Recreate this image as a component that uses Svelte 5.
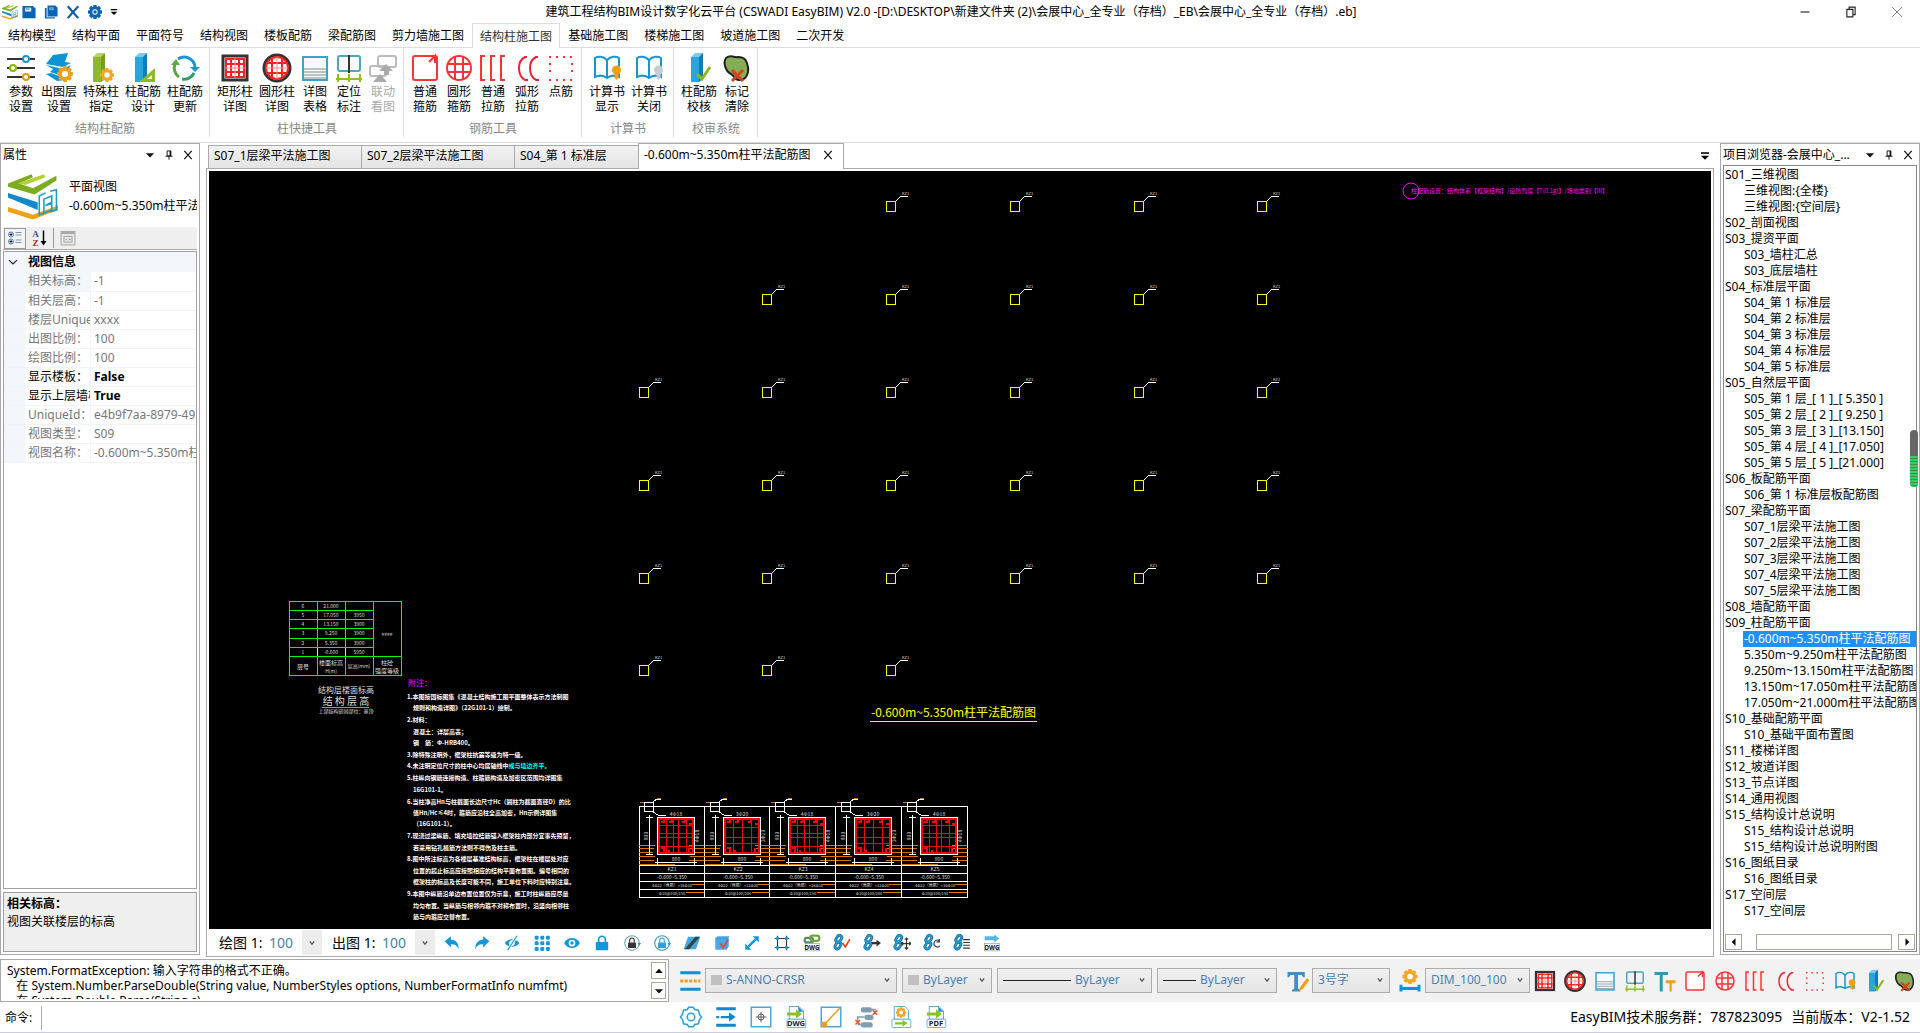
<script lang="ts">
  const gear = (cx: number, cy: number, r: number, color: string, hole = '#fff') =>
    `<g fill="${color}"><circle cx="${cx}" cy="${cy}" r="${r * 0.8}"/>` +
    [0, 45, 90, 135].map((a) => `<rect x="${cx - r}" y="${cy - r * 0.25}" width="${r * 2}" height="${r * 0.5}" rx="1" transform="rotate(${a} ${cx} ${cy})"/>`).join('') +
    `</g><circle cx="${cx}" cy="${cy}" r="${r * 0.38}" fill="${hole}"/>`;

  const book = (bulb: string) =>
    `<g fill="none" stroke="#1b95cf" stroke-width="2"><path d="M16 8C12 4 7 4 4 6v19c4-2 8-2 12 1 4-3 8-3 12-1V6c-3-2-8-2-12 2z"/><path d="M16 8v18"/></g><circle cx="25.500" cy="18" r="4.500" fill="${bulb}"/><path d="M23.500 21h4v5l-2 2-2-2z" fill="${bulb}"/>`;

  const column = (front: string, top: string, side: string) =>
    `<path d="M8 5l4-4h8l-3 4z" fill="${top}"/><path d="M8 5h8v25H8z" fill="${front}"/><path d="M16 5l4-4v26l-4 3z" fill="${side}"/>`;

  const chain = '<g fill="none"><rect x="6" y="2" width="8" height="13" rx="4" transform="rotate(30 10 9)" stroke="#2a4f66" stroke-width="5"/><rect x="5" y="14" width="8" height="13" rx="4" transform="rotate(30 9 20)" stroke="#2a4f66" stroke-width="5"/><rect x="6" y="2" width="8" height="13" rx="4" transform="rotate(30 10 9)" stroke="#17a0e0" stroke-width="3"/><rect x="5" y="14" width="8" height="13" rx="4" transform="rotate(30 9 20)" stroke="#17a0e0" stroke-width="3"/></g>';

  const page = (label: string) =>
    `<path d="M7 2h13l6 6v11H7z" fill="#fff" stroke="#1b95cf" stroke-width="1"/><path d="M19 2l7 7h-7z" fill="#1b95cf"/><path d="M4 10h12V6l8 6-8 6v-4H4z" fill="#8cc220"/><rect x="4" y="19" width="25" height="11" rx="1" fill="#fff" stroke="#3a9fd0"/><text x="16" y="28" text-anchor="middle" font-size="10" font-weight="700" fill="#123">${label}</text>`;

  const lock = (color: string, s = '') => `<g ${s}><rect x="9" y="15" width="14" height="10" rx="1" fill="${color}"/><path d="M12 15v-4a4 4 0 0 1 8 0v4" fill="none" stroke="${color}" stroke-width="2"/></g>`;

  const icons: Record<string, string> = {
    params: '<g stroke="#333" stroke-width="2"><path d="M2 7h28M2 16h28M2 25h28"/></g><g fill="#fff" stroke-width="2"><circle cx="21" cy="7" r="3" stroke="#1b95cf"/><circle cx="8" cy="16" r="3" stroke="#8ab800"/><circle cx="21" cy="25" r="3" stroke="#e59a00"/></g>',
    layers: '<path d="M10 3l15-2-3 9 6 1-8 4-17-3z" fill="#0c93d3"/><path d="M3 13l17 4 8-4-4 6-8 4-9-3 3-3z" fill="#0c93d3"/><path d="M3 22l5-1 10 4 4 3-8 1z" fill="#0c93d3"/>' + gear(22, 22, 8, '#f0a020'),
    special: column('#8dba2c', '#b5d567', '#76a01c') + gear(22, 23, 7, '#f5a623'),
    design: column('#2aa4dd', '#7ccbee', '#0d7fb5') + '<path fill-rule="evenodd" d="M28 16v14H12zM25 23v4h-5z" fill="#8db92e"/>',
    update: '<g fill="none" stroke-width="3"><path d="M9 7a11 11 0 0 1 17 8" stroke="#1b95cf"/><path d="M6 12a11 11 0 0 0 4 13" stroke="#5aa845"/><path d="M13 27a11 11 0 0 0 12-6" stroke="#2f9f6a"/></g><path d="M21 15h10l-5 5z" fill="#1b95cf"/><path d="M2 13h9l-4-6z" fill="#5aa845"/>',
    rectcol: '<rect x="4" y="4" width="24" height="24" fill="#fff" stroke="#333" stroke-width="3"/><rect x="7" y="7" width="18" height="18" fill="none" stroke="#f22" stroke-width="2"/><path d="M12 6v20M20 6v20M6 12h20M6 20h20" stroke="#f22" stroke-width="2"/><path d="M16 6v20M6 16h20" stroke="#f88"/>',
    roundcol: '<circle cx="16" cy="16" r="13" fill="#fff" stroke="#333" stroke-width="3"/><circle cx="16" cy="16" r="11" fill="none" stroke="#f22" stroke-width="2"/><path d="M11 6v20M21 6v20M6 11h20M6 21h20" stroke="#f22" stroke-width="2"/><path d="M16 5v22M5 16h22" stroke="#f88"/>',
    table: '<rect x="4" y="5" width="24" height="23" fill="#f4fafd" stroke="#3aa3cc" stroke-width="2"/><path d="M5 17h22M5 20h22M5 23h22M5 26h22" stroke="#888"/>',
    locate: '<g fill="none"><rect x="5" y="4" width="22" height="15" rx="2" stroke="#4aa9bd" stroke-width="2"/><path d="M16 3v18" stroke="#333" stroke-width="2"/><path d="M5 22v8M16 22v8M27 22v8M3 27h26" stroke="#8cc220" stroke-width="2"/></g>',
    linked: '<g fill="none" stroke="#bbb" stroke-width="2"><rect x="11" y="4" width="18" height="11" rx="2"/><rect x="3" y="14" width="16" height="10" rx="2"/></g><path d="M12 19l7-7 7 7h-4v4h-5v-4zM6 30l7-8 7 8z" fill="#aaa"/>',
    stirrup: '<rect x="4" y="4" width="24" height="24" rx="2" fill="#fff" stroke="#f33" stroke-width="2"/><path d="M20 10l6-6v7" fill="none" stroke="#f33" stroke-width="2"/>',
    ring: '<g fill="none" stroke="#f33" stroke-width="2"><circle cx="16" cy="16" r="12"/><path d="M12 5v22M20 5v22M5 12h22M5 20h22"/></g>',
    ties: '<path d="M8 4H4v24h4M18 4h-4v24h4M28 4h-4v24h4" fill="none" stroke="#f33" stroke-width="2"/>',
    arcs: '<path d="M16 5h-2C6 9 6 23 14 28h3M27 5h-2C17 9 17 23 25 28h3" fill="none" stroke="#e23" stroke-width="2"/>',
    dots: '<g stroke="#f33" stroke-width="2" fill="none" stroke-dasharray="2 5"><path d="M4 5h25M4 28h25M5 11v14M27 11v14"/></g>',
    bookon: book('#f0a010'),
    bookoff: book('#c5cdd3'),
    check: column('#2aa4dd', '#7ccbee', '#0d7fb5') + '<path d="M14 22l5 5 8-12" fill="none" stroke="#8cb820" stroke-width="3"/>',
    clear: '<path d="M5 6c5-4 8 0 12-1 8 0 9 5 10 10 1 6-2 14-9 13-5 0-4-4-8-6C4 19 2 10 5 6z" fill="#86ad55" stroke="#222" stroke-width="2"/><path d="M11 18l11 11M22 18L11 29" stroke="#d5401c" stroke-width="3"/>',
    texts: '<path d="M2 4h18v4H13v22H9V8H2z" fill="#2a9cb8"/><path d="M17 15h13v4h-5v11h-3V19h-5z" fill="#f0a010"/>',
    undo: '<path d="M3 13L14 4v6c9 0 14 6 14 17-3-7-7-9-14-9v6z" fill="#1296db"/>',
    redo: '<path d="M29 13L18 4v6C9 10 4 16 4 27c3-7 7-9 14-9v6z" fill="#1296db"/>',
    hide: '<path d="M3 16c6-9 20-9 26 0-6 9-20 9-26 0z" fill="#1296db"/><circle cx="16" cy="16" r="5" fill="#fff"/><path d="M25 3L8 29" stroke="#fff" stroke-width="5"/><path d="M25 3L8 29" stroke="#1296db" stroke-width="2"/>',
    grid: '<g fill="#1296db">' + [3, 13, 23].flatMap((x) => [3, 13, 23].map((y) => `<rect x="${x}" y="${y}" width="7" height="7" rx="2"/>`)).join('') + '</g>',
    eye: '<path d="M2 16c6-12 22-12 28 0-6 12-22 12-28 0z" fill="#1296db"/><circle cx="16" cy="16" r="6" fill="#fff"/><circle cx="16" cy="16" r="3" fill="#1296db"/>',
    lock: '<rect x="5" y="14" width="22" height="15" rx="1" fill="#1296db"/><path d="M10 15v-5a6 6 0 0 1 12 0v5" fill="none" stroke="#1296db" stroke-width="3"/>',
    lockring: '<circle cx="16" cy="16" r="13" fill="#fff" stroke="#7aa" stroke-width="2"/>' + lock('#333') + '<path d="M26 16h6l-3 5z" fill="#1296db"/>',
    unlockring: '<circle cx="16" cy="16" r="13" fill="#fff" stroke="#49b" stroke-width="2"/>' + lock('#2b9fe0') + '<path d="M26 16h6l-3 5z" fill="#1296db"/>',
    sheet: '<path d="M9 5h22l-8 22H1z" fill="#43a6e6"/><path d="M22 5h8L11 27H3z" fill="#344"/>',
    cube: '<path d="M4 8l4-4h20v18l-4 6H4z" fill="#4aa8ea"/><path d="M4 8h20v19M24 8l4-4" stroke="#2f8fd6" fill="none"/><path d="M13 17l5 7 9-14" fill="none" stroke="#e8461e" stroke-width="3"/>',
    expand: '<g fill="#1296db"><path d="M17 4h11v11zM4 17v11h11z"/><path d="M21 8l3 3L11 24l-3-3z"/></g>',
    frame: '<path d="M8 3v26M24 3v26M3 8h26M3 24h26" stroke="#333" stroke-width="2"/><g fill="#1296db"><circle cx="8" cy="8" r="3"/><circle cx="24" cy="8" r="3"/><circle cx="8" cy="24" r="3"/><circle cx="24" cy="24" r="3"/></g>',
    dwglink: '<g fill="none" stroke-width="4"><rect x="3" y="7" width="15" height="8" rx="4" stroke="#5a8a6a"/><rect x="13" y="3" width="16" height="9" rx="4" stroke="#6fa83a"/></g><rect x="4" y="17" width="25" height="13" fill="#fff" stroke="#888"/><text x="16" y="28" text-anchor="middle" font-size="11" font-weight="700" fill="#111">DWG</text>',
    chcheck: chain + '<path d="M17 16l5 7 8-14" fill="none" stroke="#e8461e" stroke-width="3"/>',
    charrow: chain + '<path d="M16 14h8v-4l8 6-8 6v-4h-8z" fill="#333"/>',
    chmove: chain + '<path d="M24 8v18M15 17h18M21 10l3-3 3 3M21 24l3 3 3-3M18 14l-3 3 3 3M29 14l3 3-3 3" fill="none" stroke="#333" stroke-width="2"/>',
    chrot: chain + '<path d="M29 12a6 6 0 1 0 1 9M29 9v5h-5" fill="none" stroke="#333" stroke-width="2"/>',
    chlist: chain + '<path d="M18 10h12M18 15h12M18 20h12M18 25h12" stroke="#333" stroke-width="2"/>',
    dwgout: '<path d="M3 4h17V1l9 7-9 7v-4H3z" fill="#5ab4ee"/><rect x="3" y="17" width="26" height="13" fill="#fff" stroke="#888"/><text x="16" y="28" text-anchor="middle" font-size="11" font-weight="700" fill="#111">DWG</text>',
    linetype: '<path d="M3 5h27M3 27h27" stroke="#0c93d3" stroke-width="4"/><path d="M3 16h27" stroke="#f0a010" stroke-width="4" stroke-dasharray="4 2"/>',
    textstyle: '<path d="M2 4h23v7h-2l-2-3h-5v18l3 2v2H8v-2l3-2V8H6l-2 3H2z" fill="#3f8fc8"/><path d="M28 12l3 3-9 12-6 3 3-6z" fill="#f0a010"/>',
    dimstyle: gear(16, 10, 10, '#f5a623') + '<path d="M4 21v9M28 21v9M4 26h24" stroke="#0c93d3" stroke-width="4"/>',
    cog: '<path d="M13 3h6l2 3 5 1 1 5 3 4-3 4-1 5-5 1-2 3h-6l-2-3-5-1-1-5-3-4 3-4 1-5 5-1z" fill="none" stroke="#2a9fe0" stroke-width="2"/><circle cx="16" cy="16" r="5" fill="none" stroke="#2a9fe0" stroke-width="2"/>',
    flow: '<path d="M3 5h26M3 27h26" stroke="#1186c8" stroke-width="4"/><path d="M3 16h4M9 16h12" stroke="#1186c8" stroke-width="3"/><path d="M20 10l9 6-9 6z" fill="#1186c8"/>',
    target: '<rect x="3" y="3" width="26" height="26" fill="#fff" stroke="#4aa8e0" stroke-width="2"/><circle cx="16" cy="16" r="4" fill="none" stroke="#333"/><path d="M16 9v14M9 16h14" stroke="#333"/>',
    dwg: page('DWG'),
    pdf: page('PDF'),
    diag: '<rect x="3" y="3" width="26" height="26" fill="#fff" stroke="#4aa8e0" stroke-width="2"/><path d="M8 25L28 4" stroke="#f0a010" stroke-width="2"/><circle cx="7" cy="26" r="4" fill="#f0a010"/>',
    nodes: '<g fill="#7fa0b0"><rect x="9" y="3" width="15" height="7" rx="3"/><rect x="14" y="13" width="12" height="7" rx="3"/><rect x="9" y="23" width="16" height="7" rx="3"/></g><path d="M24 6h5M14 16H5v5M9 26H5" fill="none" stroke="#7fa0b0" stroke-width="2"/><path d="M25 7l6 6M31 7l-6 6M2 20l6 6M8 20l-6 6" stroke="#e0502a" stroke-width="2"/>',
    report: '<path d="M7 2h14l5 5v12H7z" fill="#fff" stroke="#1b95cf"/>' + gear(16, 10, 7, '#f5a623') + '<rect x="4" y="19" width="25" height="11" rx="1" fill="#fff" stroke="#3a9fd0"/><path d="M8 23h10v-3l7 4-7 5v-3H8z" fill="#8cc220"/>',
    save: '<path d="M1 2h24l6 6v22H1z" fill="#0a64b4"/><path d="M7 6h14v9H7z" fill="#dcecf8"/><path d="M9 9h8" stroke="#0a64b4" stroke-width="2"/>',
    saveas: '<path d="M8 1h18l5 5v20H8z" fill="#0a64b4"/><path d="M2 7h4v21h19v3H2z" fill="#0a64b4"/><path d="M12 5h11v7H12z" fill="#5f9ed2"/>',
    close: '<path d="M4 3l24 27M28 3L4 30" stroke="#0a5cac" stroke-width="5"/>',
    setting: gear(16, 16, 16, '#0a64b4', '#fff') + '<circle cx="16" cy="16" r="4" fill="#0a64b4"/>',
    logo: '<path d="M0 8L15 2l1 2L7 8l9 3L31 3v3L17 15 0 10z" fill="#7cad20"/><path d="M6 8L23 2l1 2L11 9z" fill="#b5cf35"/><path d="M0 14l19 6v5L0 17z" fill="#1288c9"/><path d="M0 23l16 5 16-6v3l-16 6L0 26z" fill="#f0a010"/><g fill="none" stroke="#1b9cc9" stroke-width="1"><path d="M27 13l4-1v13l-4 1M24 14l-4 2v12l3-1"/><path d="M23 18l5-2v4l-4 2 4-1v4l-5 2z"/></g>',
    category: '<g fill="#fff" stroke="#4a7ab0" stroke-width="2"><circle cx="8" cy="9" r="5"/><circle cx="8" cy="23" r="5"/></g><path d="M5 9h6M8 6v6M5 23h6M8 20v6" stroke="#123" stroke-width="2"/><path d="M17 5h12M17 10h12M17 20h12M17 25h12" stroke="#7a94b8" stroke-width="2"/>',
    sort: '<text x="9" y="14" text-anchor="middle" font-size="18" font-weight="700" font-family="Liberation Serif" fill="#2a4fa8">A</text><text x="9" y="31" text-anchor="middle" font-size="18" font-weight="700" font-family="Liberation Serif" fill="#a02828">Z</text><path d="M25 1v24" stroke="#000" stroke-width="3"/><path d="M19 22h12l-6 9z"/>',
    props: '<rect x="2" y="3" width="28" height="27" fill="#e4e4e4" stroke="#aaa" stroke-width="2"/><path d="M3 6h26" stroke="#aaa" stroke-width="4"/><path d="M8 13h16v11H8zM11 19h3M17 19h5" fill="none" stroke="#aaa" stroke-width="2"/>',
    down: '<path d="M3 10h26L16 24z" fill="#111"/>',
    up: '<path d="M6 21h20L16 10z"/>',
    left: '<path d="M20 6v20L10 16z"/>',
    right: '<path d="M12 6v20l10-10z"/>',
    menu: '<path d="M3 4h26v5H3z"/><path d="M3 15h26L16 28z"/>',
    pin: '<path d="M10 3h12v16H10zM5 20h22M16 20v11" fill="none" stroke="#111" stroke-width="3"/><path d="M18 3h4v16h-4z"/>',
    x: '<path d="M4 3l24 26M28 3L4 29" stroke="#111" stroke-width="4"/>',
    chev: '<path d="M9 11l7 9 7-9" fill="none" stroke="#555" stroke-width="4"/>',
    fold: '<path d="M3 10l13 12 13-12" fill="none" stroke="#222" stroke-width="4"/>',
    min: '<path d="M4 16h24" stroke="#222" stroke-width="3"/>',
    restore: '<path d="M5 9h16v20H5zM11 9V3h16v20h-6" fill="none" stroke="#222" stroke-width="3"/>',
    quit: '<path d="M3 3l26 26M29 3L3 29" stroke="#555" stroke-width="2"/>'
  };

  const menus = ['结构模型', '结构平面', '平面符号', '结构视图', '楼板配筋', '梁配筋图', '剪力墙施工图', '结构柱施工图', '基础施工图', '楼梯施工图', '坡道施工图', '二次开发'];

  const groups = [
    { name: '结构柱配筋', items: [['params', '参数', '设置'], ['layers', '出图层', '设置'], ['special', '特殊柱', '指定'], ['design', '柱配筋', '设计'], ['update', '柱配筋', '更新']] },
    { name: '柱快捷工具', items: [['rectcol', '矩形柱', '详图'], ['roundcol', '圆形柱', '详图'], ['table', '详图', '表格'], ['locate', '定位', '标注'], ['linked', '联动', '看图']] },
    { name: '钢筋工具', items: [['stirrup', '普通', '箍筋'], ['ring', '圆形', '箍筋'], ['ties', '普通', '拉筋'], ['arcs', '弧形', '拉筋'], ['dots', '点筋', '']] },
    { name: '计算书', items: [['bookon', '计算书', '显示'], ['bookoff', '计算书', '关闭']] },
    { name: '校审系统', items: [['check', '柱配筋', '校核'], ['clear', '标记', '清除']] }
  ];

  const props = [
    ['相关标高：', '-1'], ['相关层高：', '-1'], ['楼层UniqueId：', 'xxxx'], ['出图比例：', '100'], ['绘图比例：', '100'],
    ['显示楼板：', 'False'], ['显示上层墙柱：', 'True'], ['UniqueId：', 'e4b9f7aa-8979-4952'], ['视图类型：', 'S09'], ['视图名称：', '-0.600m~5.350m柱平法配筋图']
  ];

  const docTabs = ['S07_1层梁平法施工图', 'S07_2层梁平法施工图', 'S04_第 1 标准层'];
  const activeDoc = '-0.600m~5.350m柱平法配筋图';

  const tree: [string, string[]][] = [
    ['S01_三维视图', ['三维视图:{全楼}', '三维视图:{空间层}']],
    ['S02_剖面视图', []],
    ['S03_提资平面', ['S03_墙柱汇总', 'S03_底层墙柱']],
    ['S04_标准层平面', [1, 2, 3, 4, 5].map((n) => `S04_第 ${n} 标准层`)],
    ['S05_自然层平面', ['S05_第 1 层_[ 1 ]_[ 5.350 ]', 'S05_第 2 层_[ 2 ]_[ 9.250 ]', 'S05_第 3 层_[ 3 ]_[13.150]', 'S05_第 4 层_[ 4 ]_[17.050]', 'S05_第 5 层_[ 5 ]_[21.000]']],
    ['S06_板配筋平面', ['S06_第 1 标准层板配筋图']],
    ['S07_梁配筋平面', [1, 2, 3, 4, 5].map((n) => `S07_${n}层梁平法施工图`)],
    ['S08_墙配筋平面', []],
    ['S09_柱配筋平面', [activeDoc, '5.350m~9.250m柱平法配筋图', '9.250m~13.150m柱平法配筋图', '13.150m~17.050m柱平法配筋图', '17.050m~21.000m柱平法配筋图']],
    ['S10_基础配筋平面', ['S10_基础平面布置图']],
    ['S11_楼梯详图', []],
    ['S12_坡道详图', []],
    ['S13_节点详图', []],
    ['S14_通用视图', []],
    ['S15_结构设计总说明', ['S15_结构设计总说明', 'S15_结构设计总说明附图']],
    ['S16_图纸目录', ['S16_图纸目录']],
    ['S17_空间层', ['S17_空间层']]
  ];

  const viewTools = ['undo', 'redo', 'hide', 'grid', 'eye', 'lock', 'lockring', 'unlockring', 'sheet', 'cube', 'expand', 'frame', 'dwglink', 'chcheck', 'charrow', 'chmove', 'chrot', 'chlist', 'dwgout'];
  const quickTools = ['rectcol', 'roundcol', 'table', 'locate', 'texts', 'stirrup', 'ring', 'ties', 'arcs', 'dots', 'bookon', 'check', 'clear'];
  const cmdTools = ['cog', 'flow', 'target', 'dwg', 'diag', 'nodes', 'report', 'pdf'];

  const log = `System.FormatException: 输入字符串的格式不正确。
   在 System.Number.ParseDouble(String value, NumberStyles options, NumberFormatInfo numfmt)
   在 System.Double.Parse(String s)`;

  const colX = [639, 762, 886, 1010, 1134, 1257];
  const rowY = [201, 294, 387, 480, 573, 665];
  const spans = [[2, 5], [1, 5], [0, 5], [0, 5], [0, 5], [0, 2]];
  const markers = rowY.flatMap((y, r) => colX.slice(spans[r][0], spans[r][1] + 1).map((x) => ({ x, y })));

  const levels = [
    ['6', '21.000', ''], ['5', '17.050', '3950'], ['4', '13.150', '3900'], ['3', '9.250', '3900'], ['2', '5.350', '3900'], ['1', '-0.600', '5950']
  ];
  const levelY = [601, 610, 619, 628, 638, 647];

  const notes: [number, string, string?][] = [
    [0, '1.本图按国标图集《混凝土结构施工图平面整体表示方法制图'],
    [1, '规则和构造详图》（22G101-1）绘制。'],
    [0, '2.材料：'],
    [1, '混凝土：详层高表；'],
    [1, '钢　筋：Φ-HRB400。'],
    [0, '3.除特殊注明外，框架柱抗震等级为特一级。'],
    [0, '4.未注明定位尺寸的柱中心均居轴线中', '或与墙边齐平。'],
    [0, '5.柱纵向钢筋连接构造、柱箍筋构造及加密区范围均详图集'],
    [1, '16G101-1。'],
    [0, '6.当柱净高Hn与柱截面长边尺寸Hc（圆柱为截面直径D）的比'],
    [1, '值Hn/Hc≤4时，箍筋应沿柱全高加密，Hn示例详图集'],
    [1, '（16G101-1）。'],
    [0, '7.现浇过梁纵筋、填充墙拉结筋锚入框架柱内部分宜事先预留，'],
    [1, '若采用钻孔植筋方法则不得伤及柱主筋。'],
    [0, '8.图中所注标高为各楼层基准结构标高，框架柱在楼层处对应'],
    [1, '位置的起止标高应按照相应的结构平面布置图。编号相同的'],
    [1, '框架柱的标高及长度可能不同，施工单位下料时应特别注意。'],
    [0, '9.本图中纵筋沿单边布置位置仅为示意，施工时柱纵筋应尽量'],
    [1, '均匀布置。当纵筋与相邻内箍不对称布置时，沿竖向相邻柱'],
    [1, '筋与内箍应交替布置。']
  ];
  const noteY = [697, 708, 720, 732, 743, 755, 766, 778, 790, 802, 813, 824, 836, 848, 859, 871, 882, 894, 906, 917];

  const details = [
    { x: 639, id: 'KZ1', top: '4Φ18', bars: '4Φ22（角筋）+16Φ18', tie: 'Φ10@100/150', dense: true },
    { x: 705, id: 'KZ2', top: '3Φ20', bars: '4Φ22（角筋）+12Φ20', tie: 'Φ10@100/200', dense: false },
    { x: 770, id: 'KZ3', top: '4Φ18', bars: '4Φ22（角筋）+16Φ18', tie: 'Φ10@100/150', dense: true },
    { x: 836, id: 'KZ4', top: '3Φ20', bars: '4Φ22（角筋）+12Φ20', tie: 'Φ10@100/200', dense: false },
    { x: 902, id: 'KZ5', top: '4Φ18', bars: '4Φ22（角筋）+16Φ18', tie: 'Φ10@100/150', dense: true }
  ];
  const orangeY = [845, 848, 852, 856, 860];

  let drawScale = $state('100');
  let plotScale = $state('100');
  let command = $state('');
</script>

{#snippet icon(name: string, cls: string)}
  <svg class={cls} viewBox="0 0 32 32" aria-hidden="true">{@html icons[name]}</svg>
{/snippet}

{#snippet combo(cls: string, label: string, value: string, swatch: boolean, line: boolean)}
  <label class="combo {cls}">
    {#if swatch}<span class="swatch"></span>{/if}
    {#if line}<span class="line"></span>{/if}
    <select aria-label={label} class:fit={line}><option>{value}</option></select>
    {@render icon('chev', 'i10')}
  </label>
{/snippet}

<div class="app">
  <header class="title">
    <div class="quick">
      {@render icon('logo', 'i16')}
      {#each ['save', 'saveas', 'close', 'setting'] as n}
        <button aria-label={n}>{@render icon(n, 'i14')}</button>
      {/each}
      <button aria-label="more">{@render icon('menu', 'i8')}</button>
    </div>
    <h1>建筑工程结构BIM设计数字化云平台 (CSWADI EasyBIM) V2.0 -[D:\DESKTOP\新建文件夹 (2)\会展中心_全专业（存档）_EB\会展中心_全专业（存档）.eb]</h1>
    <div class="win">
      {#each ['min', 'restore', 'quit'] as n}
        <button aria-label={n}>{@render icon(n, 'i12')}</button>
      {/each}
    </div>
  </header>

  <nav class="menus">
    {#each menus as m}
      <button class:active={m === '结构柱施工图'}>{m}</button>
    {/each}
  </nav>

  <div class="ribbon">
    {#each groups as g}
      <section class="group">
        <div class="items">
          {#each g.items as [n, a, b]}
            <button class:wide={a.length === 3} disabled={n === 'linked'}>
              {@render icon(n, 'i32')}
              <span>{a}</span><span>{b}</span>
            </button>
          {/each}
        </div>
        <h2>{g.name}</h2>
      </section>
    {/each}
  </div>

  <main>
    <aside class="panel left">
      <div class="phead">
        <h2>属性</h2>
        {#each ['down', 'pin', 'x'] as n}<button aria-label={n}>{@render icon(n, 'i10')}</button>{/each}
      </div>
      <div class="brand">
        {@render icon('logo', 'i50')}
        <div><p>平面视图</p><p>{activeDoc}</p></div>
      </div>
      <div class="ptools">
        <button class="on" aria-label="category">{@render icon('category', 'i16')}</button>
        <button aria-label="sort">{@render icon('sort', 'i16')}</button>
        <span class="bar"></span>
        <button aria-label="props">{@render icon('props', 'i16')}</button>
      </div>
      <div class="pgrid">
        <div class="cat">{@render icon('fold', 'i10')}<b>视图信息</b></div>
        <table>
          <tbody>
            {#each props as [k, v], i}
              <tr class:first={i === 0} class:strong={v === 'False' || v === 'True'}><td class="gut"></td><th scope="row">{k}</th><td class="val">{v}</td></tr>
            {/each}
          </tbody>
        </table>
      </div>
      <div class="desc"><b>相关标高：</b><p>视图关联楼层的标高</p></div>
    </aside>

    <section class="doc">
      <div class="tabs">
        {#each docTabs as t, i}
          <button class="tab" class:short={i === 2}>{t}</button>
        {/each}
        <div class="tab current"><span>{activeDoc}</span><button aria-label="close tab">{@render icon('x', 'i10')}</button></div>
        <button class="more" aria-label="tab list">{@render icon('menu', 'i10')}</button>
      </div>
      <div class="frame">
        <svg class="cad" viewBox="209 171 1502 758" role="img" aria-label={activeDoc}>
          {#each markers as m}
            <g fill="none" shape-rendering="crispEdges">
              <rect x={m.x + 0.5} y={m.y + 0.5} width="9" height="10" stroke="#ff0" />
              <path d="M{m.x + 10} {m.y}l5 -5h7" stroke="#fff" />
            </g>
            <text class="t4 dim" x={m.x + 16} y={m.y - 6}>KZ1</text>
          {/each}

          <g class="mag"><circle cx="1411" cy="191" r="8" fill="none" stroke="#f0f" />
            <text class="t6" x="1411" y="193">柱配筋设置：结构体系【框架结构】/设防烈度【7(0.1g)】/场地类别【III】</text></g>

          <g stroke="#0f0" fill="none" shape-rendering="crispEdges">
            <rect x="289.500" y="601.500" width="112" height="74" />
            <path d="M317.500 601v74M345.500 601v74M373.500 601v74M289 656.500h112" />
            {#each levelY.slice(1) as y}<path d="M289 {y + 0.5}h84" />{/each}
            <path d="M317.500 648v8M345.500 648v8" stroke="#ff0" />
          </g>
          {#each levels as row, r}
            {#each row as c, i}<text class="t5 dim mid" x={303 + i * 28} y={levelY[r] + 7}>{c}</text>{/each}
          {/each}
          <g class="dim mid">
            <text class="t5" x="387" y="636">####</text>
            <text class="t6" x="303" y="669">层号</text>
            <text class="t6" x="331" y="665">楼面标高</text><text class="t5" x="331" y="673">H(m)</text>
            <text class="t5" x="359" y="668">层高(mm)</text>
            <text class="t6" x="387" y="665">柱砼</text><text class="t6" x="387" y="673">强度等级</text>
            <text class="t8" x="346" y="693">结构层楼面标高</text>
            <text class="t10" x="346" y="705">结 构 层 高</text>
            <text class="t5" x="346" y="713">上部结构嵌固部位：基顶</text>
          </g>
          <path d="M322 707.500h47" stroke="#0f0" />

          <text class="t8 mag" x="408" y="686">附注：</text>
          {#each notes as [indent, txt, hot], i}
            <text class="t6 wht" x={indent ? 413 : 407} y={noteY[i] + 2}>{txt}{#if hot}<tspan class="cyan">{hot}</tspan>{/if}</text>
          {/each}

          <text class="t12 yel" x="871" y="717">{activeDoc}</text>
          <path d="M870 721.500h167" stroke="#ff0" />

          <g stroke="#fff" fill="none" shape-rendering="crispEdges">
            <rect x="639.500" y="806.500" width="328" height="91" />
            <path d="M639 865.500h328M639 873.500h328M639 881.500h328M639 889.500h328" />
            {#each details.slice(1) as d}<path d="M{d.x - 0.5} 806v91" />{/each}
          </g>
          {#each details as d}
            <g fill="none" shape-rendering="crispEdges">
              {#each orangeY as y, k}
                <path d="M{d.x} {y + 0.5}h{16 - (k % 3)}M{d.x + 50 + (k % 2)} {y + 0.5}h15" stroke="#e07000" />
              {/each}
              <path d="M{d.x} 864.500h36M{d.x + 1} 802.500h5M{d.x + 18} 798.500h4M{d.x + 22} 815.500h4M{d.x + 53} 884.500h12M{d.x + 47} 892.500h18" stroke="#e07000" />
              <path d="M{d.x + 5.5} 802.500h9v9h-9zM{d.x + 14} 802l4 -3h4M{d.x + 14} 812l5 3h8M{d.x + 10.5} 815v40M{d.x + 7} 817.500h7M{d.x + 7} 854.500h7M{d.x + 16} 862.500h42M{d.x + 18.5} 858v7M{d.x + 55.5} 858v7" stroke="#fff" />
              <rect x={d.x + 18.5} y="817.500" width="37" height="37" stroke="#fff" />
              <rect x={d.x + 20} y="819" width="34" height="34" stroke="#f00" stroke-width="2" />
              {#if d.dense}
                <path d="M{d.x + 27.5} 819v34M{d.x + 34.500} 819v34M{d.x + 39.5} 819v34M{d.x + 47.5} 819v34M{d.x + 20} 825.500h34M{d.x + 20} 833.500h34M{d.x + 20} 837.500h34M{d.x + 20} 846.500h34" stroke="#f00" />
              {:else}
                <path d="M{d.x + 28.5} 819v34M{d.x + 37.5} 819v34M{d.x + 46.5} 819v34M{d.x + 20} 827.500h34M{d.x + 20} 837.500h34M{d.x + 20} 843.500h34" stroke="#f00" />
              {/if}
              <path d="M{d.x + 22} 822h3v-2M{d.x + 30} 822h3v-2M{d.x + 43} 822h3v-2M{d.x + 50} 824h3M{d.x + 22} 848h3v4M{d.x + 30} 850v2M{d.x + 50} 848v4" stroke="#f00" stroke-width="2" />
            </g>
            <g class="dim mid">
              <text class="t5" x={d.x + 37} y="816">{d.top}</text>
              <text class="t5" x={d.x + 37} y="861">800</text>
              <text class="t5" transform="translate({d.x + 9} 836) rotate(-90)">800</text>
              <text class="t5" transform="translate({d.x + 60} 836) rotate(-90)">{d.top}</text>
              <text class="t5" x={d.x + 33} y="871">{d.id}</text>
              <text class="t5" x={d.x + 33} y="879">-0.600~5.350</text>
              <text class="t4" x={d.x + 33} y="887">{d.bars}</text>
              <text class="t4" x={d.x + 33} y="895">{d.tie}</text>
            </g>
          {/each}
        </svg>

        <div class="vtools">
          <label class="scale"><span>绘图 1:</span><select bind:value={drawScale}><option>100</option></select><i>{@render icon('chev', 'i10')}</i></label>
          <label class="scale"><span>出图 1:</span><select bind:value={plotScale}><option>100</option></select><i>{@render icon('chev', 'i10')}</i></label>
          <div class="vicons">
            {#each viewTools as n}<button aria-label={n}>{@render icon(n, 'i18')}</button>{/each}
          </div>
        </div>
      </div>
    </section>

    <aside class="panel right">
      <div class="phead">
        <h2>项目浏览器-会展中心_...</h2>
        {#each ['down', 'pin', 'x'] as n}<button aria-label={n}>{@render icon(n, 'i10')}</button>{/each}
      </div>
      <div class="treebox">
        <ul class="tree">
          {#each tree as [name, kids]}
            <li><span>{name}</span>
              {#if kids.length}
                <ul>{#each kids as k}<li><span class:sel={k === activeDoc}>{k}</span></li>{/each}</ul>
              {/if}
            </li>
          {/each}
        </ul>
        <div class="hscroll">
          <button aria-label="scroll left">{@render icon('left', 'i12')}</button>
          <span class="thumb"></span>
          <button aria-label="scroll right">{@render icon('right', 'i12')}</button>
        </div>
      </div>
    </aside>
  </main>

  <div class="bottom">
    <div class="output">
      <textarea readonly aria-label="输出" value={log}></textarea>
      <div class="vscroll">
        <button aria-label="scroll up">{@render icon('up', 'i12')}</button>
        <button aria-label="scroll down">{@render icon('down', 'i10')}</button>
      </div>
    </div>
    <div class="styles">
      {@render icon('linetype', 'i24')}
      {@render combo('layer', '图层', 'S-ANNO-CRSR', true, false)}
      {@render combo('color', '颜色', 'ByLayer', true, false)}
      {@render combo('ltype', '线型', 'ByLayer', false, true)}
      {@render combo('lweight', '线宽', 'ByLayer', false, true)}
      {@render icon('textstyle', 'i24')}
      {@render combo('tstyle', '文字样式', '3号字', false, false)}
      {@render icon('dimstyle', 'i24')}
      {@render combo('dstyle', '标注样式', 'DIM_100_100', false, false)}
      <div class="qtools">
        {#each quickTools as n}<button aria-label={n}>{@render icon(n, 'i24')}</button>{/each}
      </div>
    </div>
  </div>

  <footer>
    <label class="cmd"><span>命令:</span><input type="text" bind:value={command} /></label>
    <div class="ctools">
      {#each cmdTools as n}<button aria-label={n}>{@render icon(n, 'i24')}</button>{/each}
    </div>
    <p class="status"><span>EasyBIM技术服务群：787823095</span><span>当前版本：V2-1.52</span></p>
  </footer>

  <div class="meter"><span></span></div>
</div>

<style>
  :global(body) { margin: 0; background: #fff; }
  .app {
    display: flex; flex-direction: column; height: 100vh; overflow: hidden; position: relative;
    font: 12px/16px "Noto Sans", "Noto Sans CJK SC", sans-serif; color: #000; background: #fff;
  }
  h1, h2, p, ul { margin: 0; padding: 0; font-size: 12px; font-weight: 400; list-style: none; }
  button, select, input, textarea { font: inherit; color: inherit; margin: 0; padding: 0; border: 0; background: none; border-radius: 0; }
  button { display: flex; align-items: center; justify-content: center; flex: none; }
  select { appearance: none; }
  select, input, textarea, button { outline: 0; }
  svg { flex: none; display: block; }
  :global(svg.i8) { width: 8px; height: 8px; }
  :global(svg.i10) { width: 10px; height: 10px; }
  :global(svg.i12) { width: 12px; height: 12px; }
  :global(svg.i14) { width: 14px; height: 14px; }
  :global(svg.i16) { width: 16px; height: 16px; }
  :global(svg.i18) { width: 18px; height: 18px; }
  :global(svg.i24) { width: 24px; height: 24px; }
  :global(svg.i32) { width: 32px; height: 32px; }
  :global(svg.i50) { width: 50px; height: 50px; }

  .title { display: grid; grid-template-columns: 1fr auto 1fr; height: 23px; align-items: center; flex: none; }
  .quick { display: flex; align-items: center; gap: 8px; padding-left: 2px; }
  .quick :global(svg.i16) { margin-right: -4px; }
  .title h1 { white-space: nowrap; padding-right: 18px; }
  .win { display: flex; justify-content: flex-end; }
  .win button { width: 46px; height: 22px; }

  .menus { display: flex; height: 24px; flex: none; border-bottom: 1px solid #ddd; }
  .menus button { padding: 2px 8px 0; white-space: nowrap; height: 24px; }
  .menus .active { border: 1px solid #ddd; border-bottom: 0; height: 25px; padding: 1px 7px 0; background: #fff; color: #333; }

  .ribbon { display: flex; flex: none; height: 94px; border-bottom: 1px solid #ddd; }
  .group { padding: 4px 3px 0 4px; margin-bottom: 5px; border-right: 1px solid #ddd; display: flex; flex-direction: column; }
  .items { display: flex; height: 72px; }
  .items button { flex-direction: column; justify-content: flex-start; width: 34px; line-height: 15px; }
  .items .wide { width: 42px; }
  .items span { white-space: nowrap; height: 15px; }
  .items button:disabled { color: #aaa; }
  .group h2 { text-align: center; color: #888; line-height: 16px; }

  main { display: flex; flex: 1; min-height: 0; gap: 6px; }
  .panel { display: flex; flex-direction: column; border: 1px solid #a9a9ae; margin-bottom: 4px; padding: 0 2px 2px; box-sizing: border-box; }
  .left { width: 200px; flex: none; }
  .right { width: 200px; flex: none; }
  .phead { display: flex; align-items: center; height: 21px; flex: none; }
  .phead h2 { flex: 1; white-space: nowrap; }
  .phead button { width: 19px; height: 20px; }

  .brand { display: flex; height: 62px; align-items: center; gap: 11px; padding-left: 5px; flex: none; overflow: hidden; }
  .brand div { min-width: 0; overflow: hidden; }
  .brand p { white-space: nowrap; line-height: 19px; }
  .ptools { display: flex; align-items: center; background: #efefef; height: 22px; flex: none; padding-left: 1px; gap: 2px; border-bottom: 1px solid #a9a9ae; }
  .ptools button { width: 22px; height: 21px; }
  .ptools .on { border: 1px solid #999; box-sizing: border-box; background: #f4f4f4; }
  .bar { width: 1px; height: 20px; background: #999; margin: 0 1px; }
  .pgrid { flex: 1; min-height: 0; border: 1px solid #a0a0a0; margin-top: 1px; overflow: hidden; }
  .cat { display: flex; align-items: center; gap: 10px; padding-left: 4px; height: 20px; background: #f3f6fb; }
  table { border-collapse: collapse; table-layout: fixed; width: 100%; }
  tr { height: 19px; color: #777; }
  td, th { padding: 0; height: 18px; line-height: 18px; font-weight: 400; text-align: left; white-space: nowrap; overflow: hidden; border-bottom: 1px solid #f0f4fa; }
  .gut { width: 21px; background: #f3f6fb; }
  th { width: 62px; padding-left: 3px; border-right: 1px solid #f0f4fa; }
  .val { padding-left: 3px; }
  .first th { background: #f3f6fb; }
  .strong { color: #000; }
  .strong .val { font-weight: 700; }
  .desc { height: 56px; border: 1px solid #a0a0a0; background: #efefef; margin-top: 3px; padding: 2px 3px 0; flex: none; line-height: 18px; }

  .doc { flex: 1; min-width: 0; display: flex; flex-direction: column; margin-bottom: 2px; }
  .tabs { display: flex; align-items: flex-end; height: 25px; flex: none; padding-left: 2px; }
  .tab { width: 154px; height: 23px; box-sizing: border-box; border: 1px solid #a9a9ae; border-bottom: 0; margin-right: -1px; padding: 0 5px 3px; justify-content: flex-start; background: linear-gradient(#f2f2f2, #e4e4e4); white-space: nowrap; }
  .tab.short { width: 125px; }
  .tab.current { display: flex; align-items: center; gap: 12px; width: 206px; height: 26px; margin-bottom: -1px; background: #fff; position: relative; }
  .more { margin-left: auto; margin-right: 3px; width: 12px; height: 24px; }
  .frame { flex: 1; min-height: 0; border: 1px solid #a9a9ae; padding: 2px 2px 0; display: flex; flex-direction: column; }
  .cad { flex: 1; min-height: 0; width: 100%; background: #000; font-family: "Noto Sans CJK SC", sans-serif; }
  .t4 { font-size: 4px; }
  .t5 { font-size: 5px; }
  .t6 { font-size: 6px; }
  .t8 { font-size: 8px; }
  .t10 { font-size: 10px; }
  .t12 { font-size: 12px; }
  .mid { text-anchor: middle; }
  .dim { fill: #ddd; }
  .wht { fill: #fff; font-weight: 700; }
  .mag { fill: #f0f; }
  .yel { fill: #ff0; }
  .cyan { fill: #0ff; }

  .vtools { display: flex; align-items: center; height: 27px; flex: none; padding-left: 10px; }
  .scale { display: flex; align-items: center; font-size: 14px; height: 26px; width: 103px; margin-right: 10px; }
  .scale span { white-space: nowrap; width: 50px; }
  .scale select { flex: 1; color: #4682b4; min-width: 0; }
  .scale i { display: flex; width: 20px; height: 25px; align-items: center; justify-content: center; background: #ececec; }
  .vicons { display: flex; margin-left: -8px; }
  .vicons button { width: 30px; height: 24px; }

  .treebox { flex: 1; min-height: 0; border: 1px solid #828790; display: flex; flex-direction: column; overflow: hidden; }
  .tree { flex: 1; min-height: 0; overflow: hidden; padding-top: 1px; }
  .tree span { display: block; height: 16px; line-height: 16px; white-space: nowrap; padding-left: 1px; }
  .tree ul { padding-left: 19px; }
  .tree .sel { background: #1e90ff; color: #fff; }
  .hscroll { display: flex; height: 16px; flex: none; padding: 0 1px 1px; }
  .hscroll button, .vscroll button { border: 1px solid #aca899; box-sizing: border-box; }
  .hscroll button { width: 17px; height: 16px; }
  .hscroll .thumb { flex: 1; border: 1px solid #aca899; margin: 0 6px 0 14px; }

  .bottom { display: grid; grid-template-columns: 669fr 1251fr; height: 43px; flex: none; }
  .output { min-width: 0; border: 1px solid #a9a9ae; box-sizing: border-box; display: flex; padding: 2px 2px 2px 6px; }
  textarea { flex: 1; min-width: 0; resize: none; overflow: hidden; line-height: 15px; white-space: pre; padding-top: 1px; }
  .vscroll { width: 15px; display: flex; flex-direction: column; justify-content: space-between; }
  .vscroll button { height: 17px; width: 15px; }
  .styles { min-width: 0; background: #f2f2f2; display: flex; align-items: center; padding-left: 9px; }
  .combo { display: flex; align-items: center; height: 25px; box-sizing: border-box; border: 1px solid #acacac; background: linear-gradient(#f0f0f0, #e5e5e5); color: #4682b4; padding: 0 4px 1px 5px; flex: none; gap: 4px; margin-left: 5px; }
  .combo select { flex: 1; min-width: 0; }
  .combo select.fit { flex: none; width: 58px; }
  .swatch { width: 11px; height: 10px; background: #c0c0c0; }
  .line { flex: 1; height: 1px; background: #222; }
  .layer { width: 192px; margin-left: 3px; }
  .color { width: 90px; }
  .ltype { width: 155px; }
  .lweight { width: 120px; margin-right: 9px; }
  .tstyle { width: 78px; margin: 0 8px 0 2px; }
  .dstyle { width: 105px; margin-left: 3px; }
  .qtools { display: flex; }
  .qtools button { width: 30px; }

  footer { display: grid; grid-template-columns: 673fr auto 967fr; height: 30px; flex: none; align-items: center; border-bottom: 1px solid #ccccdc; }
  .cmd { display: flex; align-items: center; min-width: 0; padding: 2px 0 0 5px; }
  .cmd span { width: 36px; white-space: nowrap; }
  .cmd input { flex: 1; height: 24px; border-left: 1px solid #a9a9ae; }
  .ctools { display: flex; }
  .ctools button { width: 35px; }
  .status { display: flex; justify-content: flex-end; gap: 9px; font-size: 14px; padding-right: 10px; white-space: nowrap; }

  .meter { position: absolute; right: 2px; top: 430px; width: 8px; height: 57px; border-radius: 4px; background: #666; overflow: hidden; }
  .meter span { display: block; margin-top: 26px; height: 31px; background: repeating-linear-gradient(#2fd25c 0 2px, #4a8a5c 2px 3px); }
</style>
